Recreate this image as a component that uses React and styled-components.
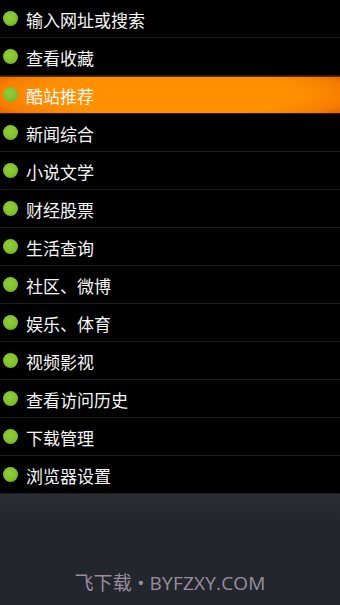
import React from "react";
import styled, { createGlobalStyle } from "styled-components";

const Global = createGlobalStyle`
  html, body { margin: 0; padding: 0; background: #23272d; }
  body { width: 340px; height: 605px; overflow: hidden; font-family: "Noto Sans CJK SC", "Noto Sans", sans-serif; }
`;

const Screen = styled.div`
  width: 340px;
  height: 605px;
  display: flex;
  flex-direction: column;
  background: #23272d;
`;

const Menu = styled.ul`
  list-style: none;
  margin: 0;
  padding: 0;
  background: #000;
`;

const Item = styled.li`
  height: 37px;
  border-bottom: 1px solid ${(p) => (p.$active ? "#3a1a00" : "#1d1d1d")};
  display: flex;
  align-items: center;
  gap: 8px;
  padding-left: 3px;
  box-sizing: content-box;
  color: #f6f6f6;
  font-size: 17px;
  font-weight: 400;
  line-height: 1;
  background: ${(p) =>
    p.$active
      ? "radial-gradient(ellipse 62% 95% at 50% 50%, #ff9000 62%, #f77c00 85%, #e25c00 100%)"
      : "#000"};
  box-shadow: ${(p) => (p.$active ? "inset 0 1px 0 #5a2c00" : "none")};
`;

const Dot = styled.span`
  display: block;
  width: 15px;
  height: 15px;
  min-width: 15px;
  border-radius: 50%;
  flex: none;
  background: radial-gradient(circle at 45% 40%, #94ce3c 0%, #7ebe2c 60%, #619d1c 100%);
`;

const Label = styled.span`
  padding-top: 1px;
`;

const Footer = styled.div`
  flex: 1;
  display: flex;
  align-items: flex-end;
  justify-content: center;
  padding-bottom: 9px;
  background: linear-gradient(#2b2f34, #23272d 30px);
`;

const Watermark = styled.span`
  color: #9a8e9e;
  font-size: 19px;
  font-family: "Open Sans", "Noto Sans CJK SC", sans-serif;
  letter-spacing: 0.2px;
`;

const items = [
  "输入网址或搜索",
  "查看收藏",
  "酷站推荐",
  "新闻综合",
  "小说文学",
  "财经股票",
  "生活查询",
  "社区、微博",
  "娱乐、体育",
  "视频影视",
  "查看访问历史",
  "下载管理",
  "浏览器设置",
];

export default function App() {
  return (
    <>
      <Global />
      <Screen>
        <Menu>
          {items.map((t, i) => (
            <Item key={t} $active={i === 2}>
              <Dot />
              <Label>{t}</Label>
            </Item>
          ))}
        </Menu>
        <Footer>
          <Watermark>飞下载 • BYFZXY.COM</Watermark>
        </Footer>
      </Screen>
    </>
  );
}
